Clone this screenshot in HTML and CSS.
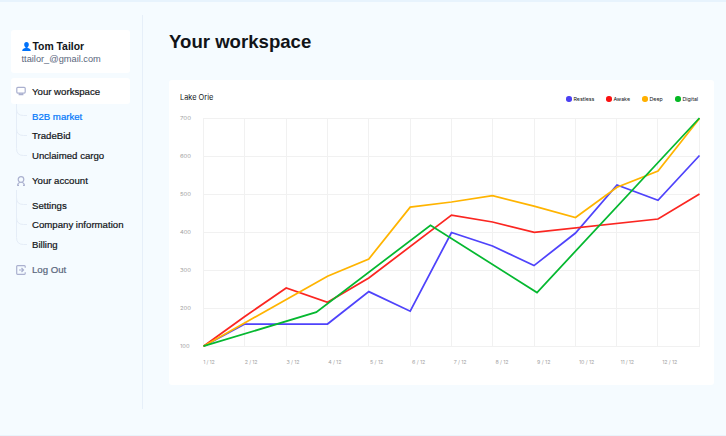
FILE: index.html
```html
<!DOCTYPE html>
<html lang="en">
<head>
<meta charset="utf-8">
<title>Your workspace</title>
<link rel="stylesheet" href="styles.css">
</head>
<body>
<div class="app">
  <aside class="sidebar">
    <div class="profile">
      <div class="profile-name">
        <svg class="avatar" viewBox="0 0 9 9"><path d="M4.5 0C2.900 0 2.200 1.100 2.200 2.500c0 1.300.5 2.300 1.300 2.900v.6C1.500 6.300.2 7.100.2 9h8.600c0-1.900-1.300-2.700-3.300-3v-.6c.8-.6 1.300-1.600 1.300-2.900C6.800 1.100 6.100 0 4.500 0z"/></svg>
        <span class="name">Tom Tailor</span>
      </div>
      <span class="email">ttailor_@gmail.com</span>
    </div>
    <nav class="menu">
      <a class="item active">
        <svg class="icon" viewBox="0 0 10 10"><rect x=".8" y="1.300" width="8.400" height="5.800" rx="1"/><path d="M3.800 7.100v1.300M6.200 7.100v1.300M2.600 8.600h4.800"/></svg>
        <span>Your workspace</span>
      </a>
      <div class="group">
        <svg class="tree" viewBox="0 0 12 54"><path d="M.5 0v44.500q0 7 7 7H11M.5 5q0 6.500 7 6.500H11M.5 24.500q0 7 7 7H11"/></svg>
        <div class="links">
          <a class="current">B2B market</a>
          <a>TradeBid</a>
          <a>Unclaimed cargo</a>
        </div>
      </div>
      <a class="item">
        <svg class="icon" viewBox="0 0 10 10"><circle cx="5" cy="3.500" r="2.800"/><path d="M1.500 9.300c.2-1.500 1-2.500 2.300-3.100M8.500 9.300c-.2-1.500-1-2.500-2.300-3.100M1 9.300h2M7 9.300h2"/></svg>
        <span>Your account</span>
      </a>
      <div class="group">
        <svg class="tree" viewBox="0 0 12 54"><path d="M.5 -3v47.500q0 7 7 7H11M.5 5q0 6.500 7 6.500H11M.5 24.500q0 7 7 7H11"/></svg>
        <div class="links">
          <a>Settings</a>
          <a>Company information</a>
          <a>Billing</a>
        </div>
      </div>
      <a class="item logout">
        <svg class="icon" viewBox="0 0 10 10"><path d="M9.200 2.800V1.500Q9.200.7 8.400.7H1.500Q.7.700.7 1.500v7q0 .8.800.8h6.900q.8 0 .8-.8V7.200M3 5h4.300M5.500 3L7.500 5 5.500 7"/></svg>
        <span>Log Out</span>
      </a>
    </nav>
  </aside>
  <main class="main">
    <h1>Your workspace</h1>
    <section class="card">
      <header class="card-head">
        <h2>Lake Orie</h2>
        <ul class="legend">
          <li class="restless">Restless</li>
          <li class="awake">Awake</li>
          <li class="deep">Deep</li>
          <li class="digital">Digital</li>
        </ul>
      </header>
      <svg class="chart" viewBox="169 110 545 275">
        <path class="grid" d="M203 118.500H700M203 156.500H700M203 194.500H700M203 232.500H700M203 270.500H700M203 308.500H700M203 346.500H700M203.500 118V347M244.500 118V347M286.500 118V347M327.500 118V347M368.500 118V347M410.500 118V347M451.500 118V347M492.500 118V347M534.500 118V347M575.500 118V347M616.500 118V347M657.500 118V347M699.500 118V347"/>
        <g class="series">
          <polyline class="s-restless" points="203.500,346.200 244.800,324 327.500,324 368.800,291.600 410.200,311.200 451.500,232.500 492.500,246 534,265.600 575.500,233 617,185 658,200.300 699.500,155.500"/>
          <polyline class="s-awake" points="203.500,346.200 244.800,316.500 286.200,288 327.500,302.300 368.800,278 451.500,215.100 492.500,222 534.300,232.400 658,219 699.500,194"/>
          <polyline class="s-deep" points="203.500,346.200 327.500,276.300 368.800,259 410.200,207.100 451.500,202 492.500,195.600 534,206.200 575.500,217.500 617,187.300 658,171 699.500,118.500"/>
          <polyline class="s-digital" points="203.500,346.200 316.300,312.200 430.500,225.300 537,292.500 699.500,118"/>
        </g>
        <g class="axis">
          <text x="180" y="120" textLength="11" lengthAdjust="spacingAndGlyphs">700</text>
          <text x="180" y="158" textLength="11" lengthAdjust="spacingAndGlyphs">600</text>
          <text x="180" y="196" textLength="11" lengthAdjust="spacingAndGlyphs">500</text>
          <text x="180" y="234" textLength="11" lengthAdjust="spacingAndGlyphs">400</text>
          <text x="180" y="272" textLength="11" lengthAdjust="spacingAndGlyphs">300</text>
          <text x="180" y="310" textLength="11" lengthAdjust="spacingAndGlyphs">200</text>
          <text x="180" y="348" textLength="9.500" lengthAdjust="spacingAndGlyphs">100</text>
          <text x="203.200" y="364" textLength="11.500">1 / 12</text>
          <text x="244.800" y="364" textLength="12.800">2 / 12</text>
          <text x="286.500" y="364" textLength="13">3 / 12</text>
          <text x="328.200" y="364" textLength="13.200">4 / 12</text>
          <text x="370" y="364" textLength="13.200">5 / 12</text>
          <text x="412" y="364" textLength="13.200">6 / 12</text>
          <text x="453.700" y="364" textLength="12.800">7 / 12</text>
          <text x="495.400" y="364" textLength="13.200">8 / 12</text>
          <text x="537" y="364" textLength="13.400">9 / 12</text>
          <text x="579" y="364" textLength="15.200">10 / 12</text>
          <text x="620.600" y="364" textLength="13.400">11 / 12</text>
          <text x="662.300" y="364" textLength="15">12 / 12</text>
        </g>
      </svg>
    </section>
  </main>
</div>
</body>
</html>
```
FILE: styles.css
```css
* { box-sizing: border-box; }
body {
  margin: 0;
  background: #f5fbff;
  color: #111418;
  font-family: "Liberation Sans", Arial, sans-serif;
}
svg { display: block; flex: none; }
.app {
  display: flex;
  height: 436px;
  border-top: 2px solid #e7f3fd;
  border-bottom: 1px solid #e9f3fb;
}
.sidebar {
  width: 143px;
  height: 394px;
  margin-top: 13px;
  padding: 15px 12px 0 11px;
  border-right: 1px solid #e6eff9;
}
.profile {
  height: 43px;
  padding: 10px 0 0 10.500px;
  border-radius: 3px;
  background: #fff;
}
.profile-name { display: flex; align-items: center; gap: 2px; height: 13px; }
.avatar { width: 9px; height: 9px; fill: #0072fa; }
.name { font-size: 10.400px; font-weight: 700; line-height: 13px; white-space: nowrap; }
.email {
  display: block;
  font-size: 9.250px;
  line-height: 12px;
  color: #59667c;
}
.menu {
  margin-top: 5px;
  font-size: 9.650px;
  -webkit-text-stroke: 0.200px currentColor;
}
.item {
  display: flex;
  align-items: center;
  gap: 6px;
  height: 25px;
  padding-left: 5px;
  border-radius: 3px;
  white-space: nowrap;
}
.active { height: 26px; background: #fff; }
.icon { width: 10px; height: 10px; fill: none; stroke: #aab0cf; stroke-width: 1.200; }
.group { display: flex; height: 64px; padding-left: 5px; }
.tree { width: 12px; height: 54px; overflow: visible; fill: none; stroke: #e5edf7; }
.links { display: flex; flex-direction: column; padding: 2.500px 0 0 4px; }
.links a { height: 19.700px; line-height: 19.700px; white-space: nowrap; }
.current { color: #0077fa; }
.logout { color: #59667c; }
.main { padding: 29px 0 0 26px; }
h1 {
  margin: 0;
  font-size: 18.600px;
  line-height: 22px;
  font-weight: 700;
}
.card {
  width: 545px;
  height: 305px;
  margin-top: 27px;
  border-radius: 3px;
  background: #fff;
}
.card-head {
  display: flex;
  align-items: center;
  justify-content: space-between;
  height: 30px;
  padding: 6px 15px 0 11px;
}
h2 { margin: 0; font: 400 7.400px/10px Inter, sans-serif; }
.legend {
  display: grid;
  grid-template-columns: 40px 36px 33px 24px;
  margin: 2px 0 0;
  padding: 0;
  list-style: none;
  font: 400 5.300px/8px Inter, sans-serif;
}
.legend li { display: flex; align-items: center; gap: 2px; }
.legend li::before {
  content: "";
  width: 5.500px;
  height: 5.500px;
  border-radius: 50%;
  background: var(--dot);
}
.restless { --dot: #4b40f2; }
.awake { --dot: #fa1111; }
.deep { --dot: #ffb000; }
.digital { --dot: #05b824; }
.chart { width: 545px; height: 275px; }
.grid { fill: none; stroke: #f1f1f1; }
.series { fill: none; stroke-width: 1.750; }
.s-restless { stroke: #4f43fb; }
.s-awake { stroke: #fb2621; }
.s-deep { stroke: #ffb400; }
.s-digital { stroke: #05b830; }
.axis { font: 400 5.300px Inter, sans-serif; fill: #a3a3a3; }
```
